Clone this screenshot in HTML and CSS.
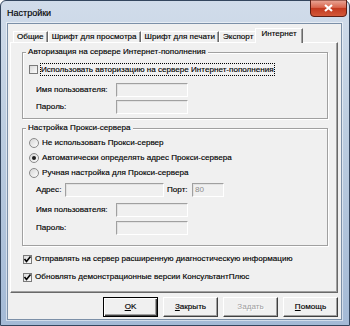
FILE: index.html
```html
<!doctype html>
<html lang="ru">
<head>
	<meta charset="UTF-8">
	<title>Настройки</title>
	<link rel="stylesheet" href="styles.css">
</head>
<body>
	<div class="window">
		<div class="titlebar">
			<span class="title">Настройки</span>
			<span class="close">
				<svg width="37" height="17" viewBox="0 0 37 17">
					<defs>
						<linearGradient id="cg" x1="0" y1="0" x2="0" y2="1">
							<stop offset="0" stop-color="#eaa99a"/>
							<stop offset="0.45" stop-color="#d9664e"/>
							<stop offset="0.5" stop-color="#c2391f"/>
							<stop offset="1" stop-color="#d45a3a"/>
						</linearGradient>
					</defs>
					<path d="M0.5 0 H36.5 V13 a3.5 3.5 0 0 1 -3.5 3.5 H4 a3.5 3.5 0 0 1 -3.5 -3.5 Z" fill="url(#cg)" stroke="#5e1e14"/>
					<path d="M15 5 L22 11 M22 5 L15 11" stroke="#fff" stroke-width="2.2"/>
				</svg>
			</span>
		</div>
		<div class="client">
			<div class="tabs">
				<div class="tab">Общие</div>
				<div class="tab">Шрифт для просмотра</div>
				<div class="tab">Шрифт для печати</div>
				<div class="tab">Экспорт</div>
				<div class="tab active">Интернет</div>
			</div>
			<div class="panel">
				<fieldset class="group group-auth">
					<legend>Авторизация на сервере Интернет-пополнения</legend>
					<div class="row">
						<span class="box"></span>
						<span class="focus">Использовать авторизацию на сервере Интернет-пополнения</span>
					</div>
					<div class="field first">
						<span class="lbl">Имя пользователя:</span>
						<span class="input"></span>
					</div>
					<div class="field">
						<span class="lbl">Пароль:</span>
						<span class="input"></span>
					</div>
				</fieldset>
				<fieldset class="group group-proxy">
					<legend>Настройка Прокси-сервера</legend>
					<div class="row radio-row">
						<span class="radio"></span>
						<span>Не использовать Прокси-сервер</span>
					</div>
					<div class="row radio-row">
						<span class="radio on"></span>
						<span>Автоматически определять адрес Прокси-сервера</span>
					</div>
					<div class="row radio-row">
						<span class="radio"></span>
						<span>Ручная настройка для Прокси-сервера</span>
					</div>
					<div class="field addr">
						<span class="lbl lbl-addr">Адрес:</span>
						<span class="input input-addr"></span>
						<span class="lbl-port">Порт:</span>
						<span class="input input-port">80</span>
					</div>
					<div class="field name">
						<span class="lbl">Имя пользователя:</span>
						<span class="input"></span>
					</div>
					<div class="field pass">
						<span class="lbl">Пароль:</span>
						<span class="input"></span>
					</div>
				</fieldset>
				<div class="row bottom-check first">
					<span class="box checked"><svg width="9" height="9" viewBox="0 0 9 9"><path d="M1.5 4 L3.5 6.5 L7.5 1.5" fill="none" stroke="#000" stroke-width="1.6"/></svg></span>
					<span>Отправлять на сервер расширенную диагностическую информацию</span>
				</div>
				<div class="row bottom-check">
					<span class="box checked"><svg width="9" height="9" viewBox="0 0 9 9"><path d="M1.5 4 L3.5 6.5 L7.5 1.5" fill="none" stroke="#000" stroke-width="1.6"/></svg></span>
					<span>Обновлять демонстрационные версии КонсультантПлюс</span>
				</div>
			</div>
			<div class="buttons">
				<div class="btn default"><u>O</u>K</div>
				<div class="btn"><u>З</u>акрыть</div>
				<div class="btn disabled">Задать</div>
				<div class="btn"><u>П</u>омощь</div>
			</div>
		</div>
	</div>
</body>
</html>
```

FILE: styles.css
```css
* { box-sizing: border-box; }
body { margin: 0; font: 8.1px/10px "Liberation Sans", Arial, sans-serif; color: #000; -webkit-text-stroke: 0.15px #000; }

.window { width: 350px; height: 326px; padding: 0 7px 5px 6px; display: flex; flex-direction: column; background: linear-gradient(#d1dcea, #bccde0 40%, #a4bad6); border: 1px solid #34465e; border-radius: 6px 6px 0 0; }
.titlebar { height: 22px; flex: none; display: flex; align-items: center; justify-content: space-between; }
.title { font-size: 9px; padding-top: 1px; }
.close { align-self: flex-start; margin: -1px -5px 0 0; height: 17px; }
.close svg { display: block; }

.client { flex: 1; display: flex; flex-direction: column; padding: 4px 3px 2px 2px; background: #f0f0f0; border: 1px solid #7c90a8; box-shadow: 0 0 0 1px rgba(255,255,255,.5); }

.tabs { height: 14px; flex: none; display: flex; align-items: flex-end; padding-left: 3px; }
.tab { height: 11px; padding: 0 3px; border: 1px solid; border-color: #fff #696969 transparent #fff; border-bottom: none; box-shadow: inset -1px 0 #a0a0a0; white-space: nowrap; }
.tab.active { height: 15px; margin: 0 -2px -1px -2px; padding: 0 5px; position: relative; z-index: 1; background: #f0f0f0; }

.panel { height: 251px; flex: none; padding: 4px 9px 0 11px; border: 1px solid; border-color: #fff #696969 #696969 #fff; box-shadow: inset -1px -1px #a0a0a0; }

.group { margin: 0; min-width: 0; padding: 5px 0 4px 6px; border: 1px solid #a0a0a0; box-shadow: 1px 1px #fff, inset 1px 1px #fff; }
.group legend { margin-left: -3px; padding: 0 2px; line-height: 10px; background: #f0f0f0; }
.group-proxy { margin-top: 4px; padding: 2px 0 10px 6px; }

.row { height: 14px; display: flex; align-items: center; white-space: nowrap; }
.radio-row { height: 15px; }
.field { height: 15px; margin-top: 2px; display: flex; align-items: center; white-space: nowrap; }
.field.first { margin-top: 6px; }
.field.name { margin-top: 5px; }
.field.pass { margin-top: 3px; }

.box { width: 9px; height: 9px; flex: none; margin-right: 2px; border: 1px solid #7a7a7a; background: linear-gradient(135deg, #dadada, #fbfbfb); }
.box svg { display: block; margin: -1px 0 0 -1px; }
.focus { padding: 0; line-height: 11px; border: 1px dotted #000; }

.radio { width: 10px; height: 10px; flex: none; margin-right: 3px; display: flex; align-items: center; justify-content: center; border: 1px solid #8a8a8a; border-radius: 50%; background: linear-gradient(135deg, #d6d6d6, #fdfdfd); }
.radio.on::after { content: ""; width: 4px; height: 4px; border-radius: 50%; background: #1e1e1e; }

.lbl { flex: none; width: 80px; margin-left: 7px; }
.lbl.lbl-addr { width: 29px; }
.lbl-port { flex: none; width: 25px; margin-left: 3px; }
.input { flex: none; width: 72px; height: 14px; padding-left: 2px; line-height: 12px; color: #8d8d8d; -webkit-text-stroke: 0; border: 1px solid; border-color: #a0a0a0 #fff #fff #a0a0a0; box-shadow: inset 1px 1px #e2e2e2; }
.input.input-addr { width: 99px; }
.input.input-port { width: 32px; }

.bottom-check { margin-top: 4px; }
.bottom-check.first { margin-top: 6px; }
.bottom-check .box { margin-left: 1px; margin-right: 3px; }

.buttons { height: 20px; flex: none; margin-top: 4px; display: flex; justify-content: flex-end; gap: 5px; }
.btn { width: 55px; height: 20px; display: flex; align-items: center; justify-content: center; border: 1px solid; border-color: #fff #404040 #404040 #fff; box-shadow: inset -1px -1px #a0a0a0; }
.btn.default { border-color: #000; box-shadow: inset 1px 1px #fff, inset -1px -1px #404040, inset -2px -2px #a0a0a0; }
.btn.disabled { color: #a0a0a0; -webkit-text-stroke: 0; text-shadow: 1px 1px #fff; }
```
